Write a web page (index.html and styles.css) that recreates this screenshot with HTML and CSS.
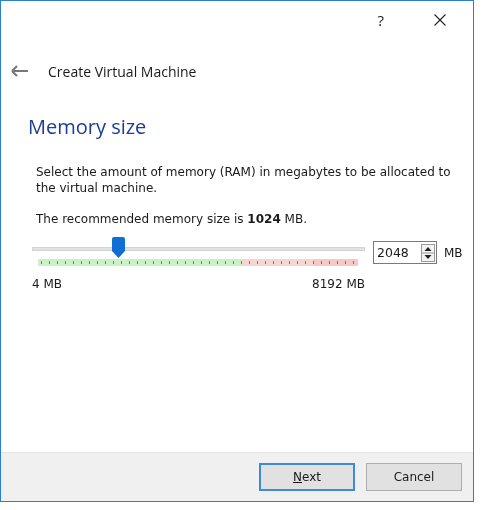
FILE: index.html
```html
<!DOCTYPE html>
<html lang="en">
<head>
    <meta charset="UTF-8">
    <title>Create Virtual Machine</title>
    <link rel="stylesheet" href="styles.css">
</head>
<body>
    <div class="window">
        <div class="titlebar">
            <span class="tb-btn help">?</span>
            <span class="tb-btn close">
                <svg width="12" height="12" viewBox="0 0 12 12"><path d="M0.5 0.5L11.5 11.5M11.5 0.5L0.5 11.5" stroke="#222" stroke-width="1.1" fill="none"/></svg>
            </span>
        </div>

        <div class="header">
            <svg class="back" width="18" height="12" viewBox="0 0 18 12"><path d="M1 6H17M1 6L6 1M1 6L6 11" stroke="#777" stroke-width="2" fill="none"/></svg>
            <span class="header-title">Create Virtual Machine</span>
        </div>

        <div class="page">
            <h2 class="page-title">Memory size</h2>
            <p class="desc">Select the amount of memory (RAM) in megabytes to be allocated to the virtual machine.</p>
            <p class="desc note">The recommended memory size is <b>1024</b> MB.</p>

            <div class="mem-row">
                <div class="slider">
                    <div class="track"></div>
                    <svg class="thumb" width="13" height="21" viewBox="0 0 13 21"><path d="M2 0H11Q13 0 13 2V14L6.5 21L0 14V2Q0 0 2 0Z" fill="#0f6fd3"/></svg>
                    <div class="scale">
                        <div class="zone ok"></div>
                        <div class="zone warn"></div>
                        <div class="zone bad"></div>
                    </div>
                    <div class="limits">
                        <span>4 MB</span>
                        <span>8192 MB</span>
                    </div>
                </div>
                <div class="spin">
                    <span class="spin-value">2048</span>
                    <span class="spin-arrows">
                        <svg width="14" height="18" viewBox="0 0 14 18"><rect x="0.5" y="0.5" width="13" height="17" fill="#f3f3f3" stroke="#9a9a9a"/><line x1="1" y1="9" x2="13" y2="9" stroke="#9a9a9a"/><path d="M3.5 7L7 3L10.5 7Z M3.5 11L7 15L10.5 11Z" fill="#222"/></svg>
                    </span>
                </div>
                <span class="unit">MB</span>
            </div>
        </div>

        <div class="footer">
            <button class="btn primary"><u>N</u>ext</button>
            <button class="btn">Cancel</button>
        </div>
    </div>
</body>
</html>
```

FILE: styles.css
```css
* {
    margin: 0;
    padding: 0;
    box-sizing: border-box;
}

body {
    background: #ffffff;
    font-family: "DejaVu Sans", Verdana, sans-serif;
    color: #1a1a1a;
}

.window {
    width: 474px;
    height: 502px;
    border: 1px solid #2b7fce;
    display: flex;
    flex-direction: column;
    background: #fff;
}

/* title bar */
.titlebar {
    height: 40px;
    display: flex;
    justify-content: flex-end;
    align-items: center;
    padding: 0 27px 2px 0;
    gap: 50px;
}

.tb-btn {
    display: flex;
    align-items: center;
}

.help {
    font-family: "Open Sans", sans-serif;
    font-size: 15px;
    color: #222;
}

/* header */
.header {
    display: flex;
    align-items: center;
    height: 62px;
    padding: 0 0 2px 10px;
}

.back {
    margin-right: 19px;
}

.header-title {
    font-family: "Open Sans", sans-serif;
    font-size: 14px;
    color: #1a1a1a;
}

/* page body */
.page {
    flex: 1;
    padding: 10px 10px 0 27px;
}

.page-title {
    font-family: "Open Sans", sans-serif;
    font-weight: 400;
    font-size: 20px;
    color: #1f3c94;
    margin-bottom: 24px;
}

.desc {
    font-size: 12px;
    line-height: 16px;
    padding-left: 8px;
    margin-bottom: 15px;
}

.desc.note {
    margin-bottom: 9px;
}

.mem-row {
    display: flex;
    align-items: flex-start;
    padding-left: 4px;
}

.mem-row > * {
    flex-shrink: 0;
}

.slider {
    width: 333px;
    position: relative;
    padding-top: 11px;
}

.track {
    height: 4px;
    background: #e2e2e2;
    border: 1px solid #d4d4d4;
}

.thumb {
    position: absolute;
    left: 80px;
    top: 1px;
}

.scale {
    display: flex;
    height: 7px;
    margin: 8px 7px 0 6px;
    background-image: repeating-linear-gradient(90deg, #8a8a8a 0 1px, transparent 1px 8px);
    background-size: 100% 3px;
    background-repeat: no-repeat;
    background-position: 3px 2px;
}

.zone {
    height: 7px;
    mix-blend-mode: multiply;
}

.ok {
    width: 204px;
    background-color: #c9f2c5;
}

.warn {
    width: 71px;
    background-color: #f6d6d2;
}

.bad {
    flex: 1;
    background-color: #f5c9c6;
}

.limits {
    display: flex;
    justify-content: space-between;
    font-size: 12px;
    margin-top: 11px;
}

.spin {
    margin-left: 8px;
    margin-top: 5px;
    width: 64px;
    height: 23px;
    border: 1px solid #7a7a7a;
    display: flex;
    align-items: center;
    justify-content: space-between;
    padding: 0 1px 0 3px;
}

.spin-value {
    font-size: 12.5px;
}

.spin-arrows {
    display: flex;
}

.unit {
    font-size: 12px;
    margin-left: 7px;
    margin-top: 10px;
}

/* footer */
.footer {
    height: 49px;
    background: #f0f0f0;
    border-top: 1px solid #e6e6e6;
    display: flex;
    justify-content: flex-end;
    align-items: center;
    gap: 11px;
    padding-right: 11px;
}

.btn {
    width: 96px;
    height: 28px;
    background: #e1e1e1;
    border: 1px solid #adadad;
    font-family: "DejaVu Sans", Verdana, sans-serif;
    font-size: 12px;
    color: #1a1a1a;
}

.btn.primary {
    border: 2px solid #3c8ad8;
}
```
